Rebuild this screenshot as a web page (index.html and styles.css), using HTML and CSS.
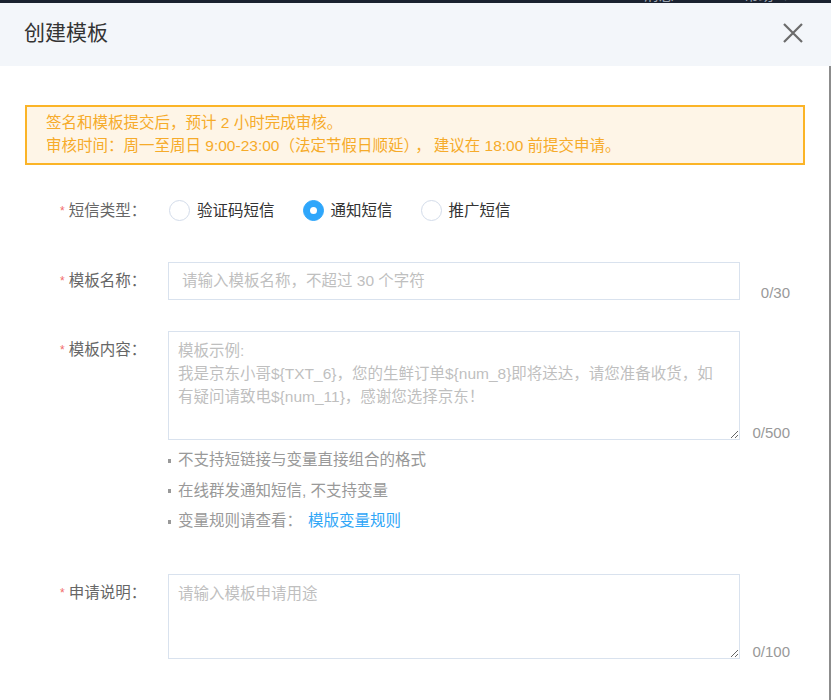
FILE: index.html
```html
<!DOCTYPE html>
<html lang="zh-CN">
<head>
<meta charset="utf-8">
<title>创建模板</title>
<link rel="stylesheet" href="styles.css">
</head>
<body>
<div class="topbar">
  <div class="topnav"><span>消息</span><span>帮助 ∨</span></div>
</div>
<div class="header">
  <div class="title">创建模板</div>
  <svg class="close" width="22" height="22" viewBox="0 0 22 22" aria-label="关闭">
    <path d="M2 2 L20 20 M20 2 L2 20" stroke="#6b6b6b" stroke-width="2.2" fill="none" stroke-linecap="butt"/>
  </svg>
</div>
<div class="content">
  <div class="notice">
    <p>签名和模板提交后，预计 2 小时完成审核。</p>
    <p>审核时间：周一至周日 9:00-23:00（法定节假日顺延）<span class="comma">，</span>建议在 18:00 前提交申请。</p>
  </div>

  <div class="row row-radio">
    <div class="label"><span class="req">*</span>短信类型：</div>
    <div class="radios">
      <span class="radio"><span class="dot"></span>验证码短信</span>
      <span class="radio checked"><span class="dot"></span>通知短信</span>
      <span class="radio"><span class="dot"></span>推广短信</span>
    </div>
  </div>

  <div class="row row-name">
    <div class="label label-input"><span class="req">*</span>模板名称：</div>
    <div class="field"><input class="input" type="text" placeholder="请输入模板名称，不超过 30 个字符"></div>
    <div class="counter">0/30</div>
  </div>

  <div class="row row-content">
    <div class="label label-area"><span class="req">*</span>模板内容：</div>
    <div class="field"><textarea class="area area-content" placeholder="模板示例:&#10;我是京东小哥${TXT_6}，您的生鲜订单${num_8}即将送达，请您准备收货，如&#10;有疑问请致电${num_11}，感谢您选择京东！"></textarea></div>
    <div class="counter">0/500</div>
  </div>

  <ul class="tips">
    <li>不支持短链接与变量直接组合的格式</li>
    <li>在线群发通知短信, 不支持变量</li>
    <li>变量规则请查看：<a class="link" href="#">模版变量规则</a></li>
  </ul>

  <div class="row row-apply">
    <div class="label label-area"><span class="req">*</span>申请说明：</div>
    <div class="field"><textarea class="area area-apply" placeholder="请输入模板申请用途"></textarea></div>
    <div class="counter">0/100</div>
  </div>
</div>
</body>
</html>
```

FILE: styles.css
```css
* { box-sizing: border-box; }

html, body {
  margin: 0;
  padding: 0;
  background: #ffffff;
}

body {
  width: 831px;
  height: 700px;
  overflow: hidden;
  font-family: "Liberation Sans", "Noto Sans CJK SC", sans-serif;
  font-size: 15.5px;
  color: #333;
}

.topbar {
  height: 3px;
  background: #1a2230;
  overflow: hidden;
}

.topnav {
  display: flex;
  justify-content: flex-end;
  gap: 70px;
  padding-right: 38px;
  margin-top: -12px;
  line-height: 14px;
  font-size: 15px;
  color: #9aa3b0;
}

.header {
  height: 63px;
  background: #f3f6fa;
  display: flex;
  align-items: center;
  justify-content: space-between;
  padding: 0 27px 0 24px;
}

.title {
  font-size: 21px;
  color: #333;
  line-height: 28px;
  margin-top: -3px;
}

.close {
  display: block;
  margin-top: -3px;
}

.content {
  height: 634px;
  border-right: 2px solid #8c8c8c;
  padding: 39px 24px 0 25px;
}

.notice {
  border: 2px solid #fbb427;
  background: #fef5e7;
  color: #f6ab2a;
  padding: 4px 19px 6px;
  height: 60px;
}

.notice p {
  margin: 0;
  line-height: 23px;
  white-space: nowrap;
}

.comma {
  margin: 0 3px 0 4px;
}

.row {
  display: flex;
  align-items: flex-start;
}

.label {
  width: 143px;
  flex: none;
  padding-left: 35px;
  color: #666;
  line-height: 20px;
  white-space: nowrap;
}

.req {
  color: #f26b6b;
  font-size: 12px;
  margin-right: 4px;
  vertical-align: 1px;
}

.row-radio {
  margin-top: 35px;
  height: 21px;
  align-items: center;
}

.radios {
  display: flex;
  align-items: center;
}

.radio {
  display: inline-flex;
  align-items: center;
  margin-left: 1px;
  margin-right: 27px;
  color: #333;
  line-height: 21px;
  white-space: nowrap;
}

.dot {
  width: 21px;
  height: 21px;
  border-radius: 50%;
  border: 1.5px solid #d3dcea;
  background: #fff;
  margin-right: 7px;
  display: inline-flex;
  align-items: center;
  justify-content: center;
}

.radio.checked .dot {
  background: #2ea6fb;
  border-color: #2ea6fb;
}

.radio.checked .dot::after {
  content: "";
  width: 7px;
  height: 7px;
  border-radius: 50%;
  background: #fff;
}

.field {
  width: 572px;
  flex: none;
}

.counter {
  width: 52px;
  flex: none;
  text-align: right;
  padding-right: 2px;
  color: #999;
  font-size: 15px;
  line-height: 20px;
  align-self: flex-end;
  margin-bottom: -3px;
}

.row-name {
  margin-top: 41px;
}

.label-input {
  line-height: 38px;
}

.input {
  display: block;
  width: 572px;
  height: 38px;
  border: 1px solid #d9e2ee;
  border-radius: 0;
  padding: 0 13px;
  font-family: "Liberation Sans", "Noto Sans CJK SC", sans-serif;
  font-size: 15.5px;
  color: #333;
  outline: none;
  background: #fff;
}

.input::placeholder,
.area::placeholder {
  color: #bfbfbf;
}

.label-area {
  padding-top: 9px;
}

.area {
  display: block;
  width: 572px;
  border: 1px solid #d9e2ee;
  border-radius: 0;
  padding: 7px 9px;
  font-family: "Liberation Sans", "Noto Sans CJK SC", sans-serif;
  font-size: 15.5px;
  line-height: 23px;
  color: #333;
  outline: none;
  background: #fff;
  margin: 0;
}

.row-content {
  margin-top: 31px;
}

.area-content {
  height: 109px;
}

.tips {
  list-style: none;
  margin: 5px 0 0 143px;
  padding: 0;
  color: #999;
}

.tips li {
  line-height: 30.5px;
  display: flex;
  align-items: center;
  white-space: nowrap;
}

.tips li::before {
  content: "";
  width: 3px;
  height: 4px;
  background: #999;
  margin-right: 7px;
  margin-top: 1px;
}

.link {
  color: #2fa6f7;
  text-decoration: none;
  margin-left: 6px;
}

.row-apply {
  margin-top: 37px;
}

.area-apply {
  height: 85px;
}
```
